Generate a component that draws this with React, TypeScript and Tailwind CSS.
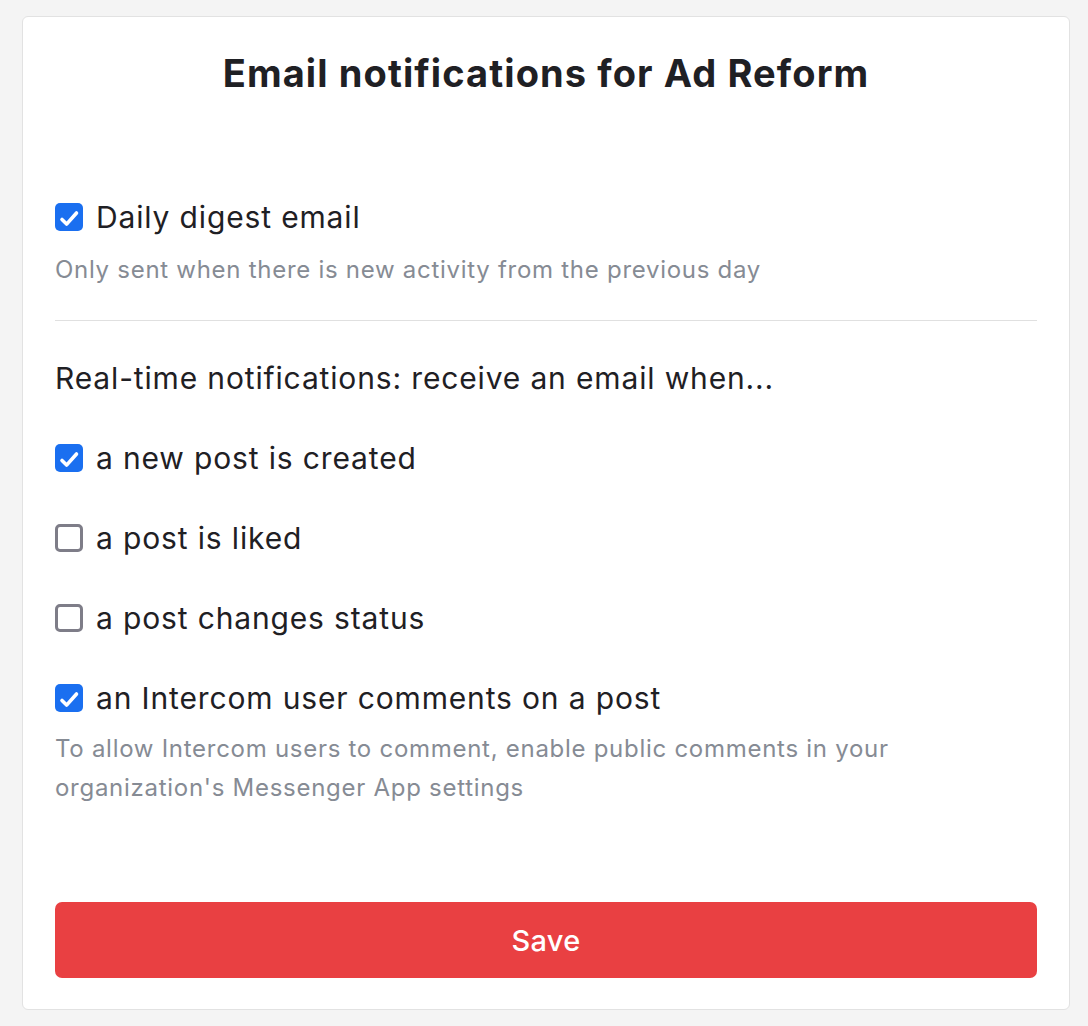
import { useState } from "react";

const OPTIONS = [
  { id: "new-post", label: "a new post is created", on: true },
  { id: "liked", label: "a post is liked", on: false },
  { id: "status", label: "a post changes status", on: false },
  { id: "intercom", label: "an Intercom user comments on a post", on: true },
];

function Check({ checked, onChange }: { checked: boolean; onChange: () => void }) {
  return (
    <button
      type="button"
      onClick={onChange}
      className={
        checked
          ? "flex h-[28px] w-[28px] shrink-0 items-center justify-center rounded-[5px] bg-[#1a6ff0]"
          : "h-[28px] w-[28px] shrink-0 rounded-[5px] border-[3px] border-[#7e7d88] bg-white"
      }
    >
      {checked && (
        <svg width="28" height="28" viewBox="0 0 28 28" fill="none">
          <path d="M7 16.5l4.6 4.6L21.5 10" stroke="white" strokeWidth="3.6" strokeLinecap="round" strokeLinejoin="round" />
        </svg>
      )}
    </button>
  );
}

export default function App() {
  const [digest, setDigest] = useState(true);
  const [opts, setOpts] = useState<Record<string, boolean>>(
    Object.fromEntries(OPTIONS.map((o) => [o.id, o.on]))
  );

  return (
    <div className="min-h-[1026px] bg-[#f4f4f4] pt-4 pl-[22px] font-['Inter',sans-serif] text-[#1f2024]">
      <div className="flex h-[994px] w-[1048px] flex-col rounded-[6px] border border-[#e2e2e2] bg-white px-8 pt-[33px]">
        <h1 className="text-center text-[38px] font-bold leading-[46px] tracking-[1.1px]">
          Email notifications for Ad Reform
        </h1>

        <label className="mt-[103px] flex items-center gap-[13px] text-[30px] leading-[36px] tracking-[0.85px]">
          <Check checked={digest} onChange={() => setDigest(!digest)} />
          Daily digest email
        </label>
        <p className="mt-[14.5px] text-[24px] leading-[39px] tracking-[0.72px] text-[#868b94]">
          Only sent when there is new activity from the previous day
        </p>

        <div className="mt-[31px] h-px bg-[#e0e0e0]" />

        <p className="mt-[39px] text-[30px] leading-[36px] tracking-[0.85px]">
          Real-time notifications: receive an email when...
        </p>

        <div className="mt-[44px] flex flex-col gap-[44.3px]">
          {OPTIONS.map((o) => (
            <label key={o.id} className="flex items-center gap-[13px] text-[30px] leading-[36px] tracking-[0.85px]">
              <Check checked={opts[o.id]} onChange={() => setOpts({ ...opts, [o.id]: !opts[o.id] })} />
              {o.label}
            </label>
          ))}
        </div>
        <p className="mt-[12.5px] w-[900px] text-[24px] leading-[39px] tracking-[0.72px] text-[#868b94]">
          To allow Intercom users to comment, enable public comments in your organization's Messenger App settings
        </p>

        <button
          type="button"
          className="mt-[95.5px] h-[76px] w-full rounded-[7px] bg-[#e94042] text-[29px] font-medium tracking-[0.3px] text-white"
        >
          Save
        </button>
      </div>
    </div>
  );
}
